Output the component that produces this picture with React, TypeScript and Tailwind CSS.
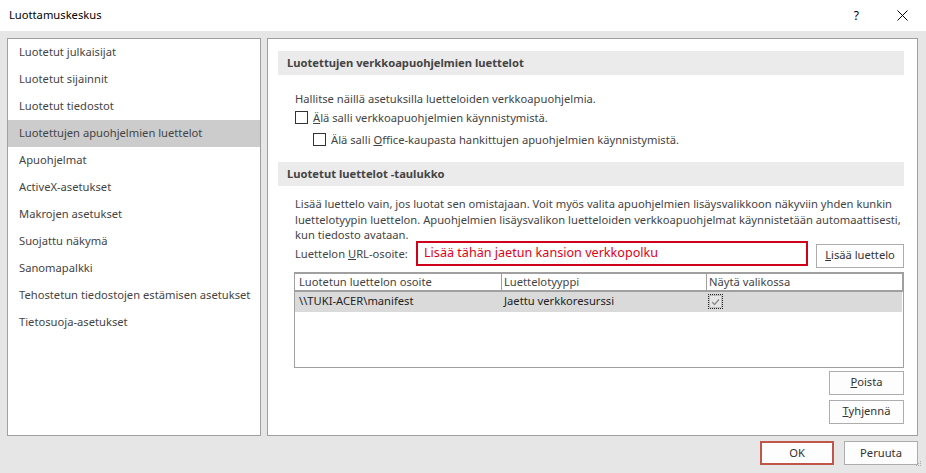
import React from "react";

const font = { fontFamily: '"Noto Sans", "Open Sans", sans-serif' };

const navItems = [
  "Luotetut julkaisijat",
  "Luotetut sijainnit",
  "Luotetut tiedostot",
  "Luotettujen apuohjelmien luettelot",
  "Apuohjelmat",
  "ActiveX-asetukset",
  "Makrojen asetukset",
  "Suojattu näkymä",
  "Sanomapalkki",
  "Tehostetun tiedostojen estämisen asetukset",
  "Tietosuoja-asetukset",
];

function Checkbox() {
  return <span className="inline-block w-[13px] h-[13px] border border-[#333] bg-white shrink-0" />;
}

function Btn({ children, className = "" }: { children: React.ReactNode; className?: string }) {
  return (
    <button
      className={
        "h-[24px] border border-[#adadad] bg-[#fdfdfd] text-[11.2px] text-[#333] flex items-center justify-center whitespace-nowrap " +
        className
      }
    >
      {children}
    </button>
  );
}

function SectionHeader({ title }: { title: string }) {
  return (
    <div className="h-[24px] bg-[#ebebeb] flex items-center pl-[9px] text-[11.2px] font-bold text-[#444]">
      {title}
    </div>
  );
}

export default function App() {
  return (
    <div
      className="w-[926px] h-[473px] bg-[#e6e6e6] flex flex-col text-[#444] text-[11.2px] overflow-hidden whitespace-nowrap"
      style={font}
    >
      {/* title bar */}
      <div className="h-[31px] bg-white flex items-center pl-[9px] pr-[16px] shrink-0">
        <span className="text-[11.2px] text-black">Luottamuskeskus</span>
        <span className="ml-auto text-[12px] text-black mr-[38px]">?</span>
        <svg width="11" height="11" viewBox="0 0 11 11" className="mr-[2px]">
          <path d="M0.5 0.5 L10.5 10.5 M10.5 0.5 L0.5 10.5" stroke="#000" strokeWidth="1" />
        </svg>
      </div>

      <div className="flex-1 flex gap-[6px] pt-[7px] pl-[7px] pr-[8px] min-h-0">
        {/* left nav */}
        <div className="w-[254px] h-[398px] bg-white border border-[#a0a0a0] shrink-0">
          {navItems.map((item, i) => (
            <div
              key={item}
              className={"h-[27px] flex items-center pl-[11px] text-[#444] " + (i === 3 ? "bg-[#cccccc]" : "")}
            >
              {item}
            </div>
          ))}
        </div>

        {/* right panel */}
        <div className="w-[651px] h-[398px] bg-white border border-[#a0a0a0] pt-[12px] pl-[10px] pr-[13px] flex flex-col">
          <SectionHeader title="Luotettujen verkkoapuohjelmien luettelot" />
          <div className="pl-[17px] pt-[15px] leading-[15px] flex flex-col">
            <div className="h-[16px] flex items-center">Hallitse näillä asetuksilla luetteloiden verkkoapuohjelmia.</div>
            <div className="h-[22px] flex items-center gap-[5px]">
              <Checkbox />
              <span>
                <span className="underline">Ä</span>lä salli verkkoapuohjelmien käynnistymistä.
              </span>
            </div>
            <div className="h-[22px] flex items-center gap-[5px] pl-[18px]">
              <Checkbox />
              <span>
                Älä salli <span className="underline">O</span>ffice-kaupasta hankittujen apuohjelmien käynnistymistä.
              </span>
            </div>
          </div>

          <div className="mt-[12px]">
            <SectionHeader title="Luotetut luettelot -taulukko" />
          </div>

          <div className="pl-[16px] pt-[10px] flex flex-col">
            <p className="leading-[15.5px] pl-[1px]">
              Lisää luettelo vain, jos luotat sen omistajaan. Voit myös valita apuohjelmien lisäysvalikkoon näkyviin yhden kunkin
              <br />
              luettelotyypin luettelon. Apuohjelmien lisäysvalikon luetteloiden verkkoapuohjelmat käynnistetään automaattisesti,
              <br />
              kun tiedosto avataan.
            </p>

            <div className="flex items-start -mt-[2px] h-[31px]">
              <span className="pl-[1px] mt-[5px] w-[122px]">
                Luettelon <span className="underline">U</span>RL-osoite:
              </span>
              <div className="w-[392px] h-[25px] border-2 border-[#d0021b] flex items-center pl-[6px] text-[12.6px] text-[#e0001a]">
                Lisää tähän jaetun kansion verkkopolku
              </div>
              <Btn className="w-[88px] ml-[8px] mt-[3px]">
                <span>
                  <span className="underline">L</span>isää luettelo
                </span>
              </Btn>
            </div>

            {/* table */}
            <div className="h-[96px] border border-[#a0a0a0] bg-white flex flex-col">
              <div className="grid grid-cols-[206px_204px_1fr] gap-x-[1px] bg-[#a0a0a0] pt-[1px] pb-[2px] pr-[1px]">
                <div className="bg-white h-[16px] leading-[16px] pl-[4px]">Luotetun luettelon osoite</div>
                <div className="bg-white h-[16px] leading-[16px] pl-[2px]">Luettelotyyppi</div>
                <div className="bg-white h-[16px] leading-[16px] pl-[2px]">Näytä valikossa</div>
              </div>
              <div className="grid grid-cols-[207px_205px_1fr] bg-[#dadada] h-[20px] mr-[1px] items-center text-[#222]">
                <div className="pl-[4px]">\\TUKI-ACER\manifest</div>
                <div className="pl-[2px]">Jaettu verkkoresurssi</div>
                <div className="pl-[1px] flex items-center">
                  <span className="w-[15px] h-[15px] border border-dotted border-[#222] flex items-center justify-center">
                    <span className="w-[13px] h-[13px] border border-[#bcbcbc] bg-[#e6e6e6] flex items-center justify-center">
                      <svg width="9" height="8" viewBox="0 0 9 8">
                        <path d="M1 4 L3.5 6.5 L8 1.5" stroke="#8c8c8c" strokeWidth="1.3" fill="none" />
                      </svg>
                    </span>
                  </span>
                </div>
              </div>
            </div>

            <div className="flex flex-col items-end gap-[5px] mt-[3px]">
              <Btn className="w-[75px]">
                <span>
                  <span className="underline">P</span>oista
                </span>
              </Btn>
              <Btn className="w-[75px]">
                <span>
                  <span className="underline">T</span>yhjennä
                </span>
              </Btn>
            </div>
          </div>
        </div>
      </div>

      {/* footer */}
      <div className="h-[37px] flex items-start justify-end gap-[10px] pt-[5px] pr-[8px] shrink-0 relative">
        <Btn className="w-[74px] border-2 border-[#c0564a] bg-[#f7f7f7]">OK</Btn>
        <Btn className="w-[74px]">Peruuta</Btn>
        <svg width="6" height="6" viewBox="0 0 6 6" className="absolute right-[4px] bottom-[6px]">
          <rect x="4" y="0" width="1" height="1" fill="#aaa" />
          <rect x="2" y="2" width="1" height="1" fill="#aaa" />
          <rect x="4" y="2" width="1" height="1" fill="#aaa" />
          <rect x="0" y="4" width="1" height="1" fill="#aaa" />
          <rect x="2" y="4" width="1" height="1" fill="#aaa" />
          <rect x="4" y="4" width="1" height="1" fill="#aaa" />
        </svg>
      </div>
    </div>
  );
}
